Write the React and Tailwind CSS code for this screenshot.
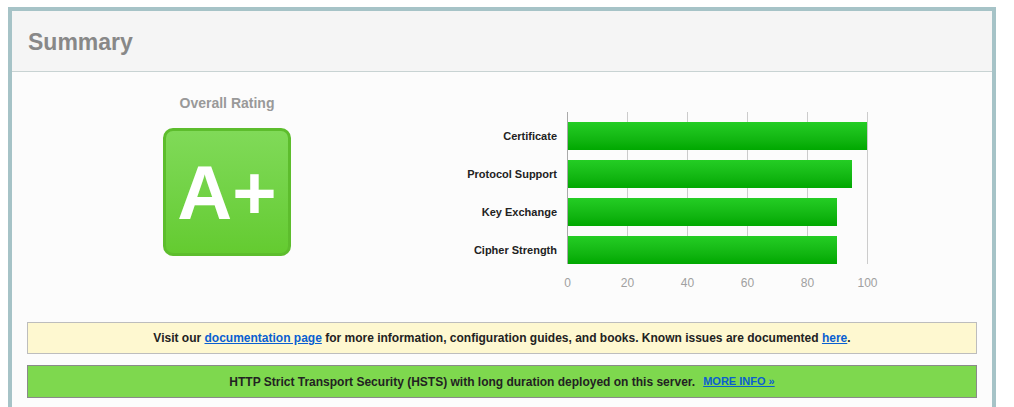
import React from "react";

const bars = [
  { label: "Certificate", value: 100 },
  { label: "Protocol Support", value: 95 },
  { label: "Key Exchange", value: 90 },
  { label: "Cipher Strength", value: 90 },
];
const ticks = [0, 20, 40, 60, 80, 100];

export default function App() {
  return (
    <div className="w-[1014px] h-[407px] overflow-hidden bg-white pt-[7px] pl-[8px] font-['Liberation_Sans',Arial,sans-serif]">
      <div className="w-[988px] h-[420px] border-4 border-[#a6c3c7] bg-[#fcfcfc]">
        <div className="h-[61px] bg-[#f5f5f5] border-b border-[#c8d3d3] flex items-center pl-[16px] pt-[2px]">
          <h2 className="text-[23px] font-bold text-[#888888] leading-none">Summary</h2>
        </div>
        <div className="flex">
          <div className="w-[430px] flex flex-col items-center pt-[23px]">
            <div className="text-[14px] leading-[16px] font-bold text-[#999999]">Overall Rating</div>
            <div className="mt-[17px] w-[128px] h-[128px] rounded-[10px] border-[3px] border-[#5dbd2d] bg-linear-to-b from-[#80da58] to-[#64cb30] flex items-center justify-center">
              <span className="text-[76px] leading-none font-bold text-white pt-[2px]">A+</span>
            </div>
          </div>
          <div className="flex pt-[40px]">
            <div className="w-[115px] flex flex-col gap-[10px] pt-[10px] mr-[10px]">
              {bars.map((b) => (
                <div key={b.label} className="h-[28px] flex items-center justify-end text-[11px] font-bold text-[#222222]">
                  {b.label}
                </div>
              ))}
            </div>
            <div className="flex flex-col">
              <div className="relative w-[301px] h-[152px]">
                {ticks.map((t, i) => (
                  <div
                    key={t}
                    className={"absolute top-0 bottom-0 w-px " + (i === 0 ? "bg-[#aaaaaa]" : "bg-[#cccccc]")}
                    style={{ left: i * 60 }}
                  />
                ))}
                <div className="relative flex flex-col gap-[10px] pt-[10px]">
                  {bars.map((b) => (
                    <div
                      key={b.label}
                      className="h-[28px] ml-px bg-linear-to-b from-[#24cd24] to-[#00a800]"
                      style={{ width: b.value * 3 - 1 }}
                    />
                  ))}
                </div>
              </div>
              <div className="relative h-[14px] mt-[12px] w-[301px]">
                {ticks.map((t, i) => (
                  <span
                    key={t}
                    className="absolute top-0 -translate-x-1/2 text-[12px] leading-[14px] text-[#a0a0a0]"
                    style={{ left: i * 60 + 0.5 }}
                  >
                    {t}
                  </span>
                ))}
              </div>
            </div>
          </div>
        </div>
        <div className="px-[15px] mt-[32px] flex flex-col gap-[11px]">
          <div className="h-[32px] border border-[#bdbdbd] bg-[#fef8d0] flex items-center justify-center text-[12px] font-bold text-[#222222]">
            <span>
              Visit our{" "}
              <a href="#" className="text-[#0a5fd0] underline">documentation page</a>{" "}
              for more information, configuration guides, and books. Known issues are documented{" "}
              <a href="#" className="text-[#0a5fd0] underline">here</a>.
            </span>
          </div>
          <div className="h-[33px] border border-[#8a8a8a] bg-[#7ed84e] flex items-center justify-center text-[12px] font-bold text-[#222222]">
            <span>HTTP Strict Transport Security (HSTS) with long duration deployed on this server.</span>
            <a href="#" className="ml-[8px] text-[11px] text-[#0a5fd0] underline">MORE INFO »</a>
          </div>
        </div>
      </div>
    </div>
  );
}
